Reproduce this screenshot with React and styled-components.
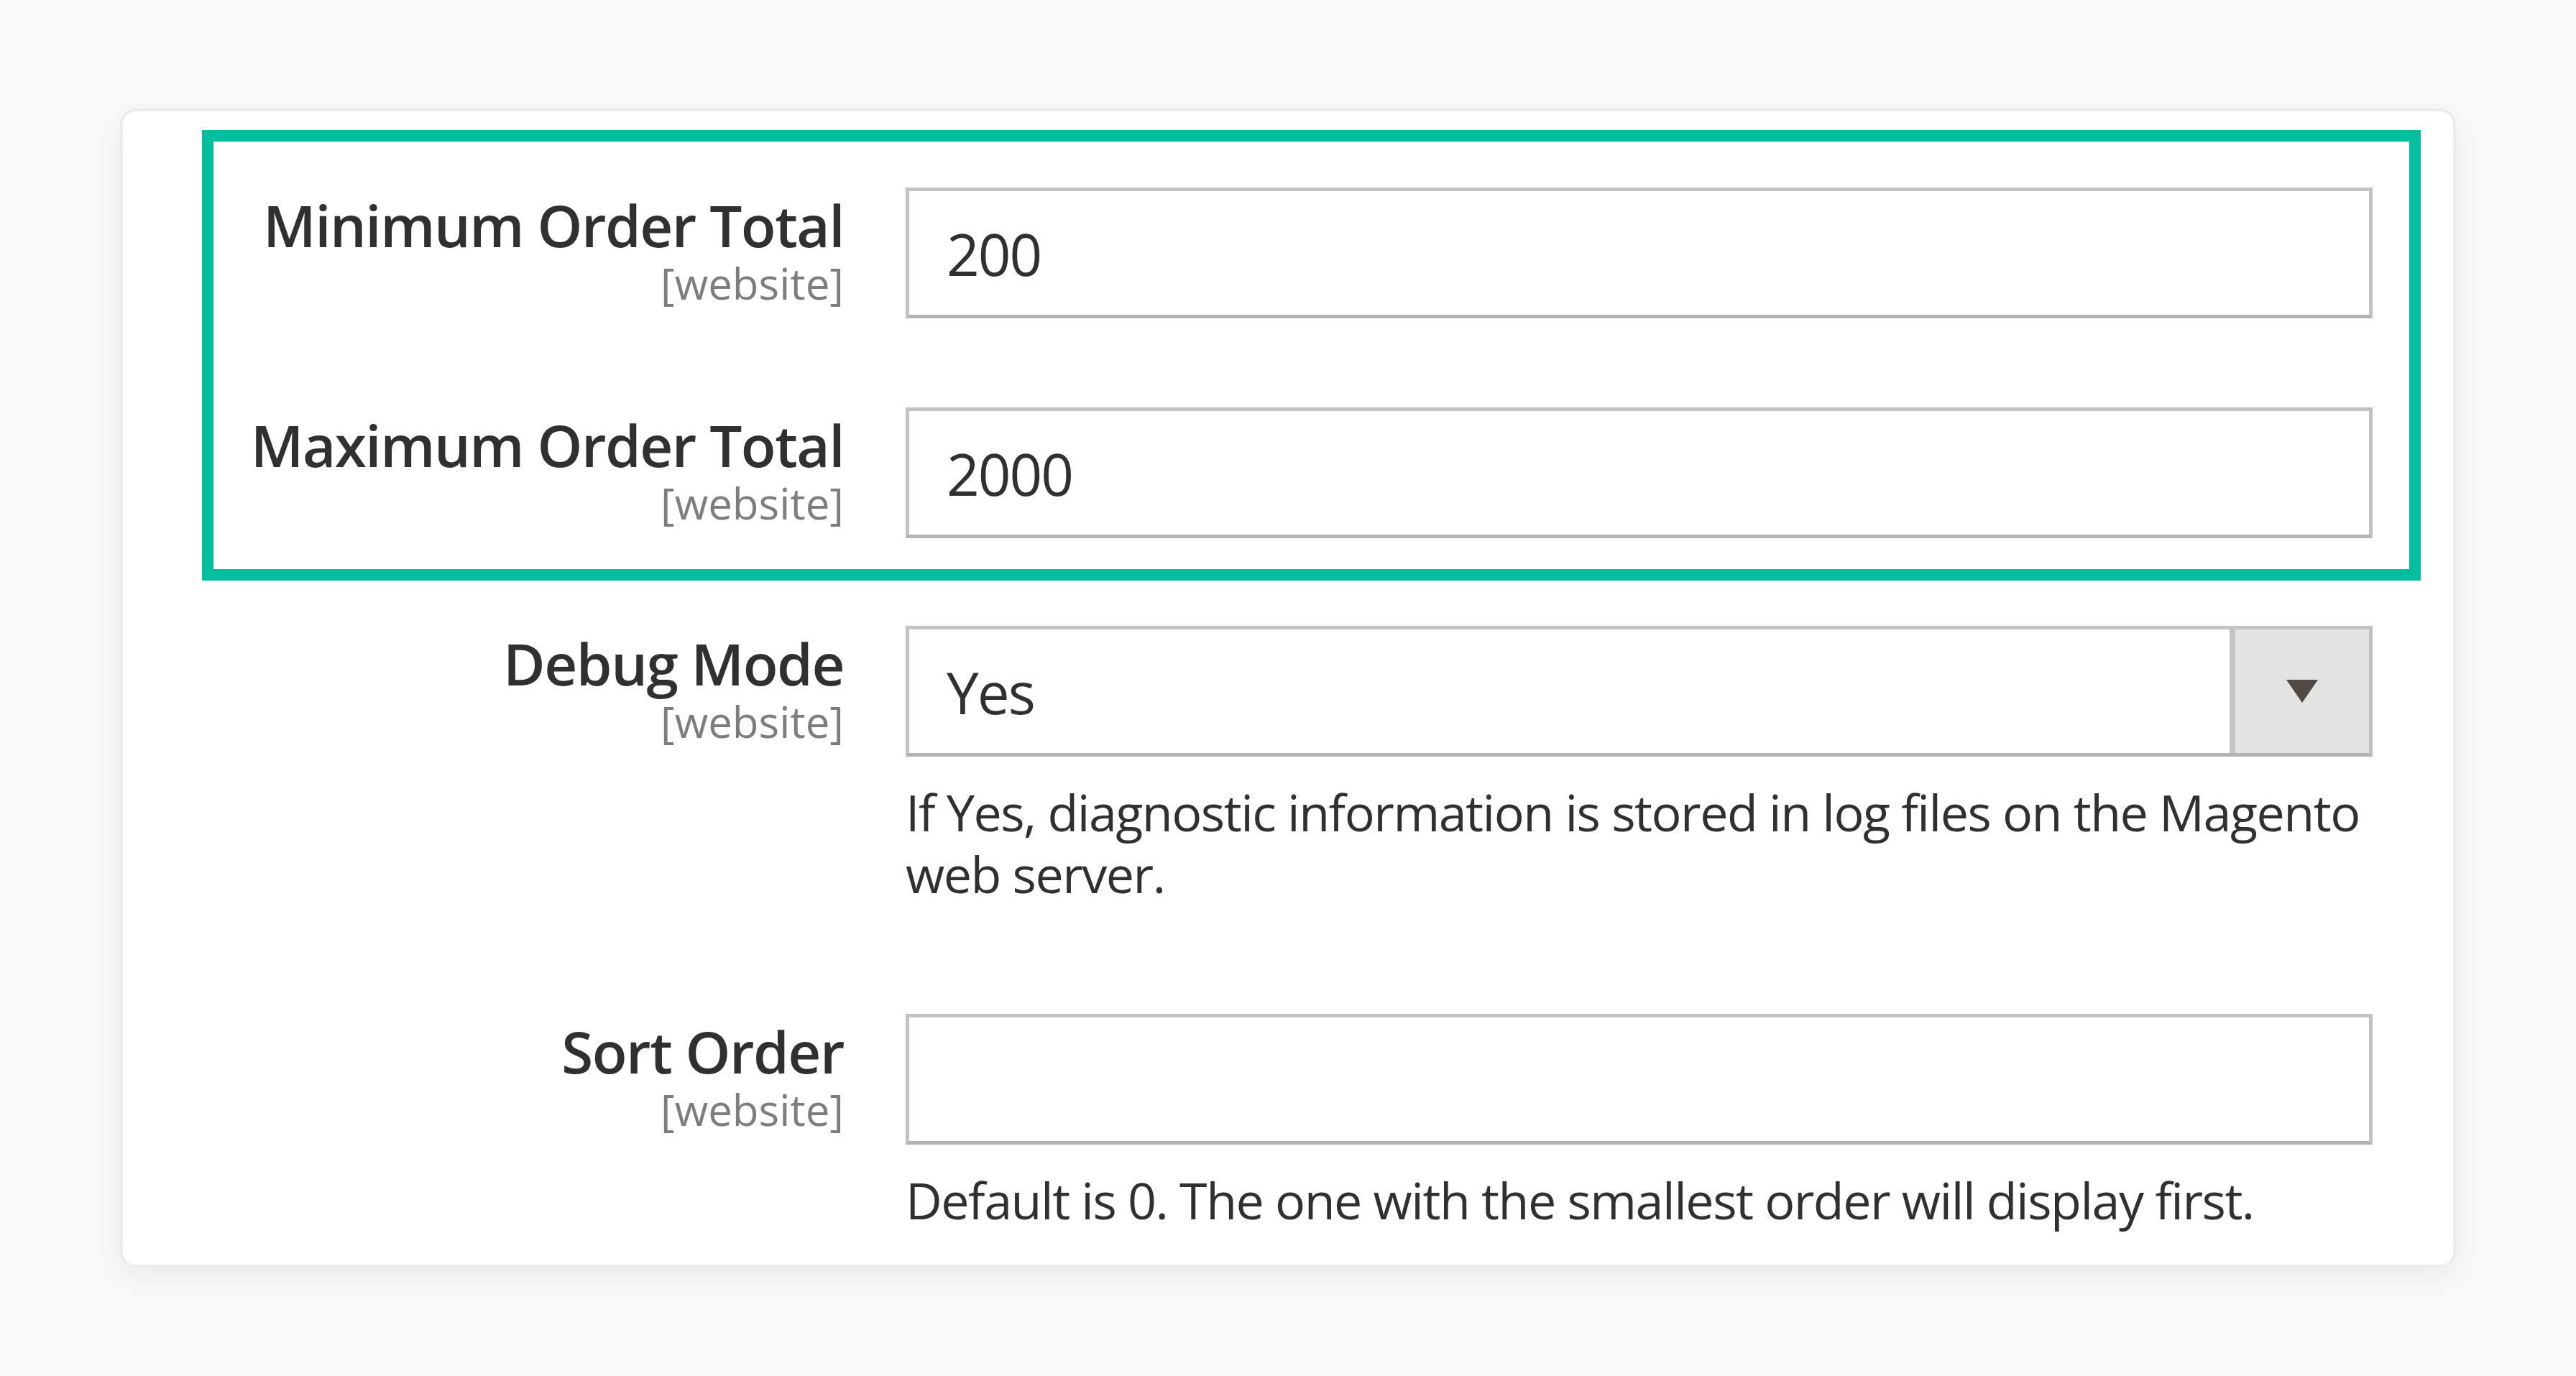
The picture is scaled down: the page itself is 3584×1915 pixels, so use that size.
import styled, { createGlobalStyle } from 'styled-components'

const GlobalStyle = createGlobalStyle`
    html, body {
        margin: 0;
        padding: 0;
        background: #f9f9f9;
    }
    body {
        font-family: 'Open Sans', 'Liberation Sans', sans-serif;
        color: #303030;
    }
`

const fields = [
    { id: 'min', label: 'Minimum Order Total', value: '200', highlight: true },
    { id: 'max', label: 'Maximum Order Total', value: '2000', highlight: true },
    {
        id: 'debug',
        label: 'Debug Mode',
        value: 'Yes',
        type: 'select',
        note: 'If Yes, diagnostic information is stored in log files on the Magento web server.',
    },
    {
        id: 'sort',
        label: 'Sort Order',
        value: '',
        note: 'Default is 0. The one with the smallest order will display first.',
    },
]

function Field({ label, value, type, note }) {
    return (
        <FieldRow>
            <LabelCell>
                <LabelText>{label}</LabelText>
                <Scope>[website]</Scope>
            </LabelCell>
            <Control>
                {type === 'select' ? (
                    <SelectBox>
                        <SelectValue>{value}</SelectValue>
                        <ArrowBox>
                            <Triangle />
                        </ArrowBox>
                    </SelectBox>
                ) : (
                    <TextInput>{value}</TextInput>
                )}
                {note && <Note>{note}</Note>}
            </Control>
        </FieldRow>
    )
}

export default function App() {
    const highlighted = fields.filter((f) => f.highlight)
    const rest = fields.filter((f) => !f.highlight)

    return (
        <Page>
            <GlobalStyle />
            <Card>
                <Highlight>
                    {highlighted.map((f) => (
                        <Field key={f.id} {...f} />
                    ))}
                </Highlight>
                <Rest>
                    {rest.map((f) => (
                        <Field key={f.id} {...f} />
                    ))}
                </Rest>
            </Card>
        </Page>
    )
}

const Page = styled.main`
    min-height: 1915px;
    padding: 151px 0 0 167px;
    box-sizing: border-box;
`

const Card = styled.section`
    width: 3250px;
    box-sizing: border-box;
    background: #ffffff;
    border: 4px solid #ececec;
    border-radius: 22px;
    box-shadow: 0 14px 40px rgba(0, 0, 0, 0.06);
    padding: 26px 45px 47px 110px;
`

const Highlight = styled.div`
    border: 16px solid #00bf9f;
    padding: 64px 0 43px 0;
    display: flex;
    flex-direction: column;
    gap: 124px;
`

const Rest = styled.div`
    padding: 63px 16px 0 16px;
    display: flex;
    flex-direction: column;
    gap: 152px;
`

const FieldRow = styled.div`
    display: grid;
    grid-template-columns: 877px 2041px;
    column-gap: 86px;
    align-items: start;
`

const LabelCell = styled.div`
    text-align: right;
    padding-top: 6px;
`

const LabelText = styled.div`
    font-size: 80px;
    line-height: 92px;
    font-weight: 600;
    letter-spacing: -1.5px;
    color: #303030;
`

const Scope = styled.div`
    font-size: 60px;
    line-height: 70px;
    color: #7d7d7d;
`

const Control = styled.div`
    display: flex;
    flex-direction: column;
`

const boxBase = `
    height: 182px;
    box-sizing: border-box;
    border: 5px solid #c2c2c2;
    border-bottom-color: #b3b3b3;
    background: #ffffff;
    font-size: 80px;
    letter-spacing: -2px;
    color: #303030;
    display: flex;
    align-items: center;
`

const TextInput = styled.div`
    ${boxBase}
    padding-left: 52px;
`

const SelectBox = styled.div`
    ${boxBase}
    padding-left: 52px;
    justify-content: space-between;
    align-items: stretch;
`

const SelectValue = styled.span`
    display: flex;
    align-items: center;
`

const ArrowBox = styled.span`
    width: 186px;
    background: #e3e3e3;
    border-left: 8px solid #c4c4c4;
    display: flex;
    align-items: center;
    justify-content: center;
`

const Triangle = styled.span`
    width: 0;
    height: 0;
    border-left: 22px solid transparent;
    border-right: 22px solid transparent;
    border-top: 32px solid #514943;
`

const Note = styled.p`
    margin: 34px 0 0 0;
    font-size: 70px;
    line-height: 86px;
    letter-spacing: -1.5px;
    color: #303030;
`
